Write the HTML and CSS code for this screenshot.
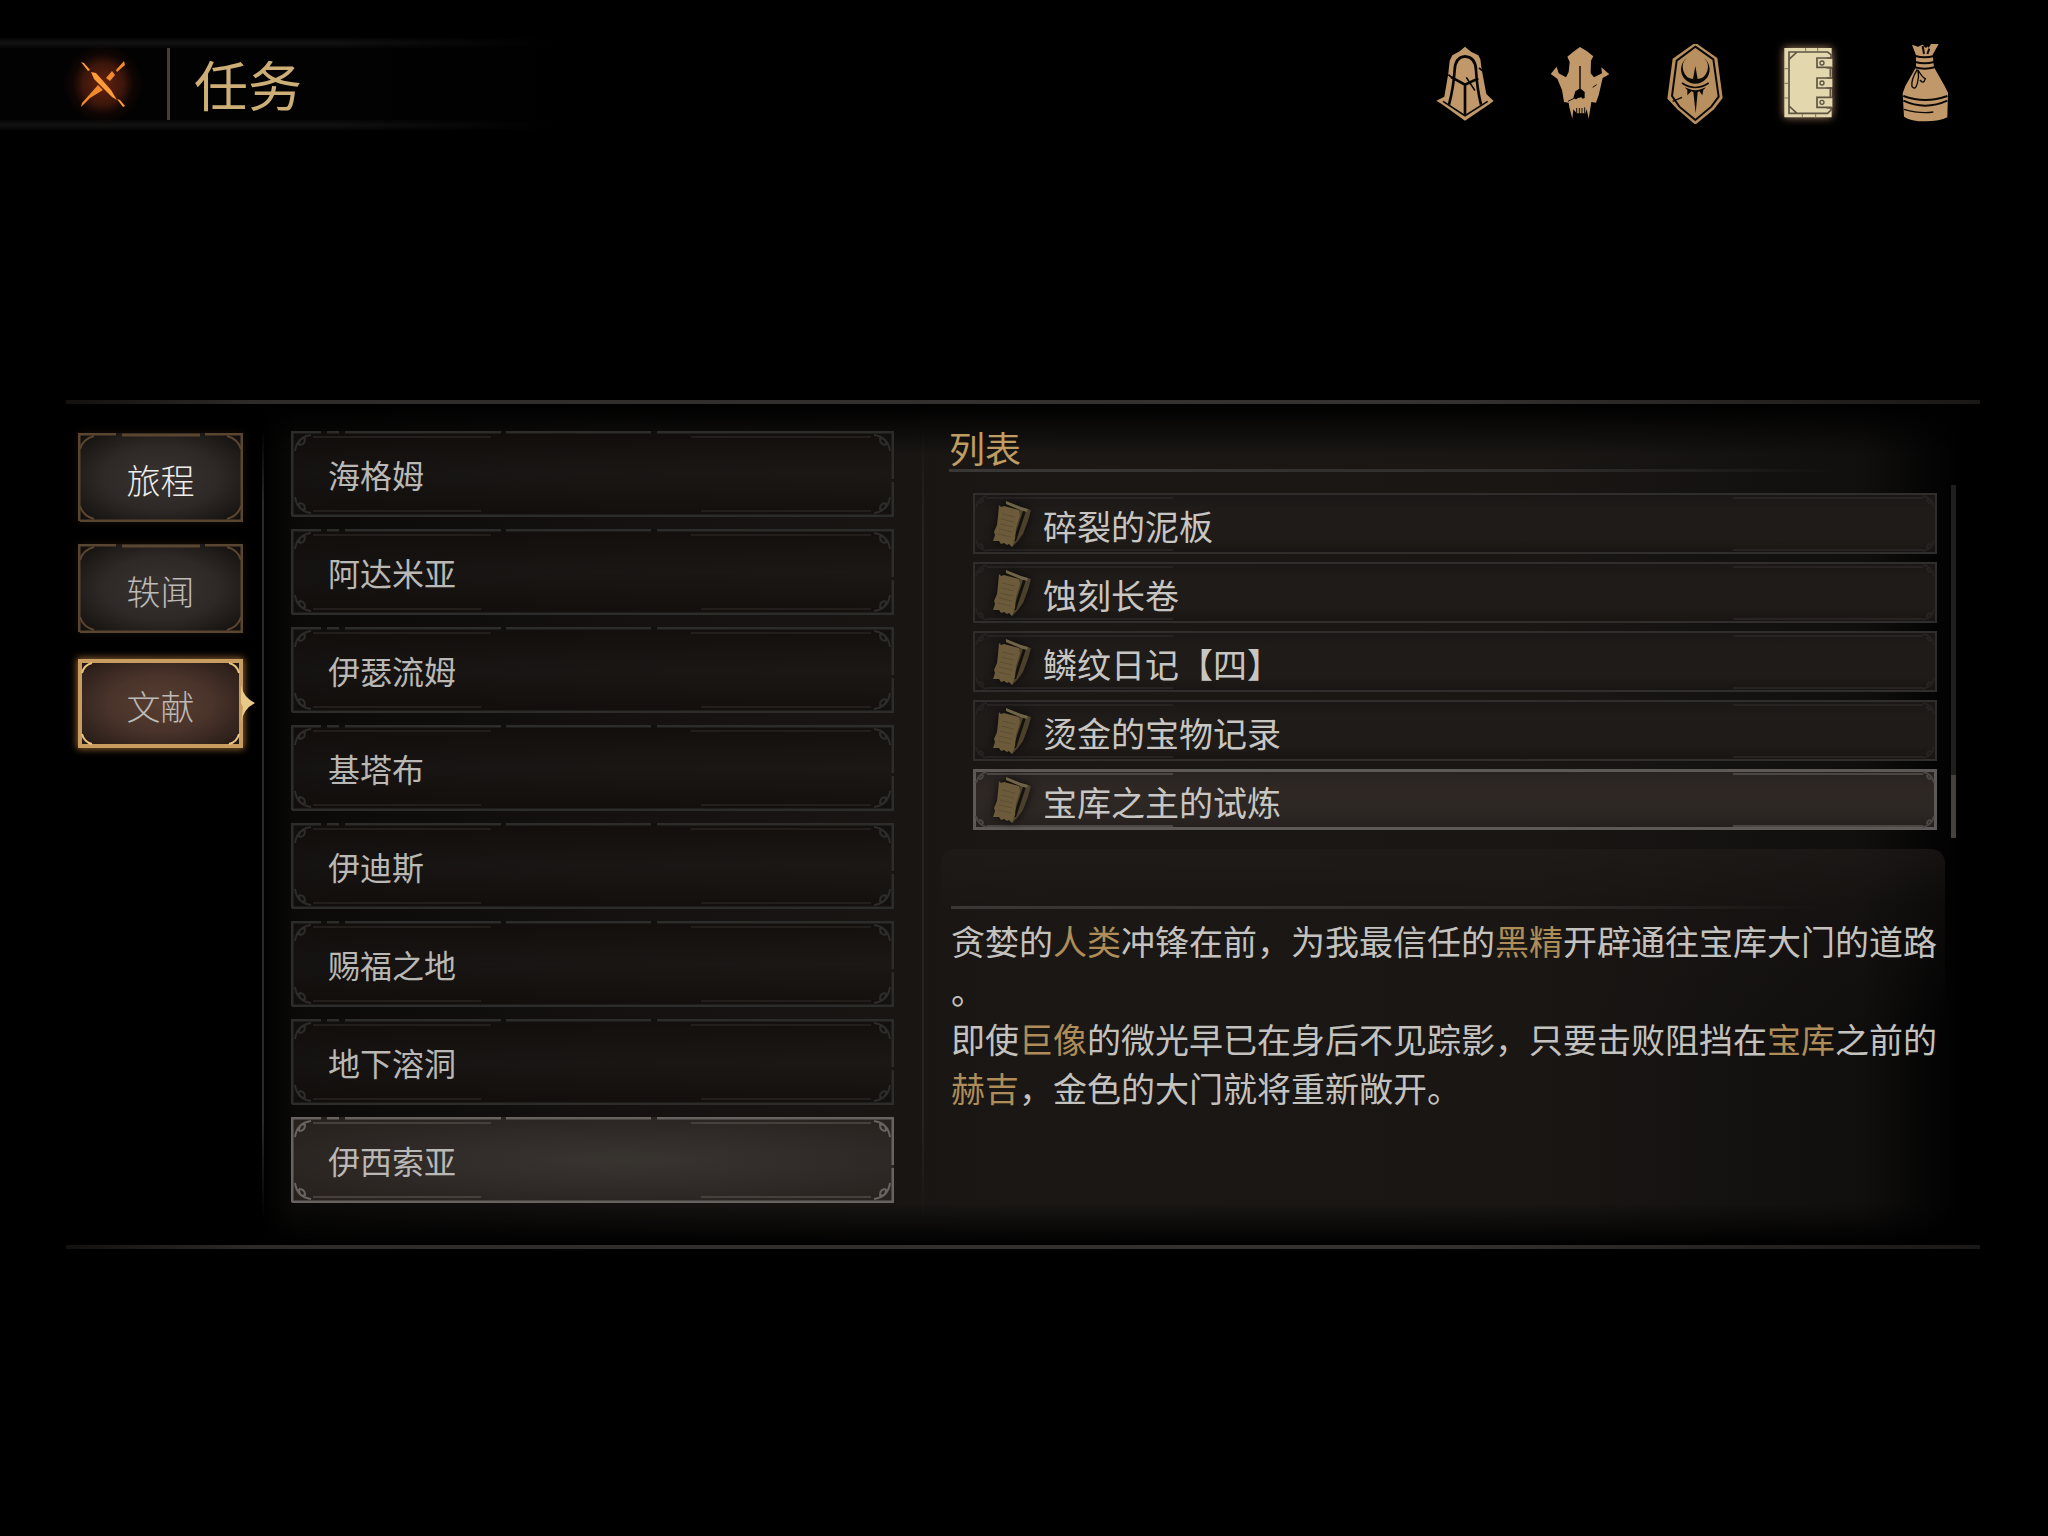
FILE: index.html
```html
<!DOCTYPE html>
<html lang="zh-CN">
<head>
    <meta charset="UTF-8">
    <meta name="viewport" content="width=device-width, initial-scale=1.0">
    <title>任务</title>
    <link rel="stylesheet" href="styles.css">
</head>
<body>
    <svg class="defs" aria-hidden="true">
        <symbol id="book" viewBox="0 0 40 48">
            <path fill="#4a402c" d="M14 2 L39 9 L36 20 L31 33 L26 40 L20 46 L17 8 Z"/>
            <path fill="#14110d" d="M14 3 L29 8 L27 10 L14 6 Z M31 10 L34 10 L27 31 L24 40 L21 40 Z"/>
            <path fill="#6f6448" d="M14 0 L29 6 L36 8 L35 11 L28 9 L14 3 Z"/>
            <path fill="#6b5b3a" d="M7 4 L9 6 L12 5 L27 9 L28 14 L24 27 L23 38 L20 46 L17 43 L15 44 L12 42 L9 43 L7 40 L1 40 L3 34 L2 31 L5 24 L6 15 Z"/>
            <path fill="none" stroke="#5e4f33" d="M10 13 L23 16 M9 18 L22 21 M8 23 L21 26 M7 28 L20 31 M6 33 L19 36"/>
        </symbol>
    </svg>

    <header class="topbar">
        <div class="title-bar">
            <button type="button" class="close" aria-label="关闭">
                <svg viewBox="0 0 44 46">
                    <path fill="#f08a2c" d="M43 0 L44 4 L36 11 L35 9 Z M31 10 L34 14 L29 20 L25 17 Z M17 24 L22 29 L9 37 L0 46 L1 42 Z"/>
                    <path fill="#ff9c38" d="M0 1 L3 2 L9 9 L7 10 Z M10 11 L15 12 L30 29 L36 39 L31 36 L13 18 Z M36 38 L39 39 L44 45 L42 46 Z"/>
                </svg>
            </button>
            <h1>任务</h1>
        </div>
        <nav class="menu">
            <a href="#" aria-label="装备">
                <svg viewBox="72 42 180 240">
                    <path fill="#c0986a" d="M162 50 L180 65 L202 76 L208 88 L212 118 L226 192 L248 213 L236 222 L162 272 L92 222 L76 212 L100 200 L112 130 L116 92 L124 76 L146 64 Z"/>
                    <path fill="none" stroke="#080604" stroke-width="8" d="M114 224 Q128 170 131 120 Q132 82 162 79 Q194 82 195 120 Q198 175 210 224 M122 142 L162 164 L202 145 M162 164 L162 254"/>
                    <path fill="none" stroke="#080604" stroke-width="5" d="M96 214 L162 257 L230 214 M166 142 L192 182 M112 134 L124 144 M214 122 L204 114"/>
                </svg>
            </a>
            <a href="#" aria-label="怪物">
                <svg viewBox="420 42 180 240">
                    <path fill="#c0986a" d="M510 51 L530 63 L550 79 L543 92 L542 130 L552 142 L576 130 L574 112 L598 133 L578 144 L566 196 L558 218 L544 216 L536 266 L530 238 L526 250 L500 250 L490 238 L487 266 L478 232 L476 218 L462 216 L456 180 L442 146 L422 132 L440 110 L446 130 L468 142 L476 126 L479 96 L472 80 L492 64 Z"/>
                    <path fill="#000" d="M508 108 L512 108 L512 176 L524 186 L524 204 L518 206 L514 202 L504 204 L498 208 L490 204 L496 184 L508 176 Z"/>
                    <path fill="none" stroke="#120c07" stroke-width="3" d="M500 234 V252 M508 234 V252 M516 234 V252 M524 232 V250 M474 214 L494 204 M548 172 L560 164"/>
                </svg>
            </a>
            <a href="#" aria-label="徽记">
                <svg viewBox="75 42 180 240">
                    <path fill="#b8905f" d="M166 38 L232 84 L248 204 L222 238 L166 284 L112 238 L82 206 L98 86 Z"/>
                    <path fill="none" stroke="#0c0805" stroke-width="6" d="M166 50 L220 88 L236 200 L214 230 L166 270 L118 230 L96 198 L110 92 Z"/>
                    <path fill="#0c0805" d="M140 84 A43 43 0 1 0 192 84 A34 36 0 0 1 173 147 L166 108 L159 147 A34 36 0 0 1 140 84 Z"/>
                    <path fill="none" stroke="#0c0805" stroke-width="5" d="M126 159 Q166 186 206 159"/>
                    <path fill="#0c0805" d="M134 172 L150 178 Q166 184 182 178 L198 172 L190 180 L187 196 L178 184 L173 186 L167 250 L160 186 L154 184 L142 196 L142 180 Z"/>
                    <path fill="none" stroke="#0c0805" stroke-width="4" d="M98 214 L126 202"/>
                </svg>
            </a>
            <a href="#" class="current" aria-label="任务">
                <svg viewBox="423 42 180 240">
                    <path fill="#e3d7ad" d="M436 54 H578 V82 H562 V116 H578 V142 H562 V176 H578 V202 H562 V236 H578 V262 H436 Z"/>
                    <path fill="#e3d7ad" d="M534 86 H580 V112 H534 Z M534 146 H580 V172 H534 Z M534 204 H580 V232 H534 Z"/>
                    <path fill="none" stroke="#5d5442" stroke-width="5" d="M576 82 V74 L566 66 H450 V250 H566 L576 240 V236 M578 84 H534 V112 H578 M578 144 H534 V174 H578 M578 202 H534 V232 H578 M574 116 V140 M574 176 V200 M450 88 L474 66 M450 228 L474 250"/>
                    <path fill="none" stroke="#82775c" stroke-width="3" d="M436 116 H448 M436 160 H448 M436 204 H448 M500 54 V64 M536 54 V64 M490 252 V262 M530 252 V262"/>
                    <g fill="none" stroke="#5d5442" stroke-width="4"><circle cx="549" cy="99" r="6"/><circle cx="549" cy="159" r="6"/><circle cx="549" cy="217" r="6"/></g>
                </svg>
            </a>
            <a href="#" aria-label="背包">
                <svg viewBox="765 42 180 240">
                    <path fill="#c0986a" d="M816 44 L834 50 L852 42 L858 54 L872 42 L896 42 L878 74 L882 112 L914 168 L924 188 L922 262 Q900 274 856 274 Q812 274 792 260 L788 190 L796 168 L828 112 L828 76 Z"/>
                    <path fill="#000" d="M846 40 L862 40 L856 54 Z M874 40 L866 54 L862 46 Z"/>
                    <path fill="none" stroke="#0c0805" stroke-width="6" d="M826 78 Q854 86 882 78 M826 96 Q854 104 882 96 M824 112 Q854 120 884 112 M790 198 Q856 222 922 198 M790 212 Q856 242 922 212 M848 48 L852 72 M868 56 L862 72"/>
                    <path fill="none" stroke="#0c0805" stroke-width="4" d="M832 118 Q812 150 816 170 Q826 182 832 160 Q838 140 834 120 Q848 144 856 146 Q850 164 840 150 M792 238 Q840 252 880 246"/>
                </svg>
            </a>
        </nav>
    </header>

    <main class="journal">
        <nav class="tabs">
            <button type="button" class="tab first">旅程</button>
            <button type="button" class="tab">轶闻</button>
            <button type="button" class="tab active">文献
                <svg viewBox="0 0 14 48" aria-hidden="true"><path fill="#e8c987" d="M0 6 Q2 18 14 24 Q2 30 0 44 L2 28 L0 24 Z"/></svg>
            </button>
        </nav>

        <div class="pages">
            <ul class="regions">
                <li><button type="button">海格姆</button></li>
                <li><button type="button">阿达米亚</button></li>
                <li><button type="button">伊瑟流姆</button></li>
                <li><button type="button">基塔布</button></li>
                <li><button type="button">伊迪斯</button></li>
                <li><button type="button">赐福之地</button></li>
                <li><button type="button">地下溶洞</button></li>
                <li><button type="button" class="active">伊西索亚</button></li>
            </ul>

            <section class="archive">
                <h2>列表</h2>
                <div class="docs">
                    <ul>
                        <li><button type="button"><svg><use href="#book"/></svg>碎裂的泥板</button></li>
                        <li><button type="button"><svg><use href="#book"/></svg>蚀刻长卷</button></li>
                        <li><button type="button"><svg><use href="#book"/></svg>鳞纹日记【四】</button></li>
                        <li><button type="button"><svg><use href="#book"/></svg>烫金的宝物记录</button></li>
                        <li><button type="button" class="active"><svg><use href="#book"/></svg>宝库之主的试炼</button></li>
                    </ul>
                    <div class="scrollbar"><div class="thumb"></div></div>
                </div>
                <article class="entry">
                    <div class="entry-head"></div>
                    <p>贪婪的<em>人类</em>冲锋在前，为我最信任的<em>黑精</em>开辟通往宝库大门的道路。</p>
                    <p>即使<em>巨像</em>的微光早已在身后不见踪影，只要击败阻挡在<em>宝库</em>之前的<em>赫吉</em>，金色的大门就将重新敞开。</p>
                </article>
            </section>
        </div>
    </main>
</body>
</html>
```

FILE: styles.css
```css
* {
    margin: 0;
    padding: 0;
    box-sizing: border-box;
}

body {
    min-height: 100vh;
    background: #000;
    color: #c4c2bf;
    font-family: 'Noto Sans CJK SC', sans-serif;
    text-spacing-trim: space-all;
}

button {
    font: inherit;
    color: inherit;
    background: none;
    border: none;
    cursor: pointer;
}

ul {
    list-style: none;
}

.defs {
    display: none;
}

/* top bar */
.topbar {
    display: flex;
    justify-content: space-between;
    align-items: flex-start;
    padding: 38px 93px 0 0;
}

.title-bar {
    display: flex;
    align-items: center;
    width: 552px;
    height: 92px;
    padding-left: 63px;
    background:
        linear-gradient(to right, transparent 60%, #000) 0 0 / 100% 100%,
        linear-gradient(#050505, #121212 50%, #050505) 0 0 / 100% 10px no-repeat,
        linear-gradient(#050505, #121212 50%, #050505) 0 100% / 100% 10px no-repeat,
        #020202;
}

.close {
    width: 80px;
    height: 80px;
    background: radial-gradient(closest-side, #64220f, #3d160b 50%, rgba(30, 10, 5, 0.5) 75%, transparent);
}

.close svg {
    display: block;
    width: 44px;
    height: 46px;
    margin: 0 auto;
}

.title-bar h1 {
    margin-left: 24px;
    padding-left: 24px;
    border-left: 3px solid #4b3c33;
    color: #ccae76;
    font-size: 54px;
    font-weight: 400;
    line-height: 72px;
}

.menu {
    display: flex;
    gap: 55px;
    padding-top: 6px;
}

.menu a,
.menu svg {
    display: block;
    width: 60px;
    height: 80px;
}

.menu .current {
    filter: drop-shadow(0 0 4px #a98564);
}

/* journal */
.journal {
    display: flex;
    margin: 270px 68px 0 66px;
    padding: 4px 17px 4px 0;
    background:
        linear-gradient(to right, #121110, #2e2c2a 10%, #353331 70%, #1a1918) 0 0 / 100% 4px no-repeat,
        linear-gradient(to right, #121110, #2e2c2a 10%, #353331 70%, #1a1918) 0 100% / 100% 4px no-repeat;
}

.tabs {
    flex: 0 0 196px;
    display: flex;
    flex-direction: column;
    gap: 22px;
    padding: 29px 19px 0 12px;
}

.tab {
    height: 89px;
    padding-top: 2px;
    font-size: 34px;
    font-weight: 300;
    line-height: 73px;
    color: #bdbab7;
    border: 8px solid transparent;
    border-image: url("data:image/svg+xml,%3Csvg xmlns='http://www.w3.org/2000/svg' width='165' height='89' fill='none' stroke='%235a4630' stroke-width='2'%3E%3Cpath d='M1 88V1H38M44 2H122M127 1H164V88H2' stroke-width='3'/%3E%3Cpath d='M2 16Q5 6 16 3M149 3Q160 6 163 16M2 73Q5 83 16 86M149 86Q160 83 163 73'/%3E%3C/svg%3E") 18 / 18px;
    background: radial-gradient(ellipse at center, #383330, #2e2926 50%, #1c1816 80%, #0c0a09) border-box;
    box-shadow: 0 0 10px #17110b;
}

.tab.first {
    color: #f0eeeb;
}

.tab.active {
    position: relative;
    margin-top: 4px;
    border-image-source: url("data:image/svg+xml,%3Csvg xmlns='http://www.w3.org/2000/svg' width='165' height='89' fill='none' stroke='%23c99c5f' stroke-width='2'%3E%3Cpath d='M2 87V2H163V87Z' stroke-width='4'/%3E%3Cpath stroke='%23e7c47f' d='M4 14Q6 6 14 4M151 4Q159 6 161 14M4 75Q6 83 14 85M151 85Q159 83 161 75'/%3E%3C/svg%3E");
    background-image: radial-gradient(ellipse at center, #583e32, #49332a 45%, #2f211c 80%, #18110f);
    box-shadow: 0 0 7px 1px #8f6431;
}

.tab.active svg {
    position: absolute;
    top: 12px;
    right: -20px;
    width: 14px;
    height: 48px;
}

.pages {
    flex: 1;
    display: grid;
    grid-template-columns: 660fr 1041fr;
    background:
        linear-gradient(transparent 3%, #2c2a29 12%, #2c2a29 85%, transparent 97%) 0 0 / 2px 100% no-repeat,
        linear-gradient(#000, transparent 6%, transparent 95%, #000),
        linear-gradient(to right, #000, #0b0a09 2%, #141110 20%, #1a1715 45%, #191614 75%, #110f0e 94%, #050505 98%, #000);
}

.regions {
    display: flex;
    flex-direction: column;
    gap: 12px;
    padding: 27px 28px 42px 29px;
}

.regions button {
    display: block;
    width: 100%;
    height: 86px;
    padding: 0 17px;
    border: solid transparent;
    border-width: 0 20px;
    font-size: 32px;
    text-align: left;
    color: #bab8b5;
    border-image: url("data:image/svg+xml,%3Csvg xmlns='http://www.w3.org/2000/svg' width='603' height='86' fill='none' stroke='%232c2c2b'%3E%3Cpath stroke-width='3' d='M1 85V1H30M36 1H48M54 1H210M215 1H360M366 1H602V48M602 51V85H1'/%3E%3Cpath stroke='%23211e1c' stroke-width='2' d='M22 6H200M400 6H580M22 80H190M410 80H580'/%3E%3Cpath stroke-width='2' d='M4 20Q6 6 20 4M8 14Q14 14 14 8Q8 6 8 14M599 20Q597 6 583 4M595 14Q589 14 589 8Q595 6 595 14M4 66Q6 80 20 82M8 72Q14 72 14 78Q8 80 8 72M599 66Q597 80 583 82M595 72Q589 72 589 78Q595 80 595 72'/%3E%3C/svg%3E") 20 / 20px;
    background: linear-gradient(rgba(18, 14, 12, 0.8), rgba(28, 25, 23, 0.6) 50%, rgba(18, 14, 12, 0.8)) border-box;
}

.regions .active {
    border-image-source: url("data:image/svg+xml,%3Csvg xmlns='http://www.w3.org/2000/svg' width='603' height='86' fill='none' stroke='%23676360'%3E%3Cpath stroke-width='3' d='M1 85V1H30M36 1H48M54 1H210M215 1H360M366 1H602V48M602 51V85H1'/%3E%3Cpath stroke='%2345403c' stroke-width='2' d='M22 6H200M400 6H580M22 80H190M410 80H580'/%3E%3Cpath stroke-width='2' d='M4 20Q6 6 20 4M8 14Q14 14 14 8Q8 6 8 14M599 20Q597 6 583 4M595 14Q589 14 589 8Q595 6 595 14M4 66Q6 80 20 82M8 72Q14 72 14 78Q8 80 8 72M599 66Q597 80 583 82M595 72Q589 72 589 78Q595 80 595 72'/%3E%3C/svg%3E");
    background: radial-gradient(ellipse at 55% 50%, #383430, #302b28 45%, #261f1c) border-box;
}

/* document list and text */
.archive {
    padding: 22px 7px 0 19px;
    background: linear-gradient(transparent 3%, #262423 15%, #262423 85%, transparent 97%) 0 0 / 2px 100% no-repeat;
}

.archive h2 {
    margin-left: 8px;
    height: 46px;
    background: linear-gradient(to right, #3a3836, #2e2c2a 60%, transparent 88%) 0 100% / 100% 3px no-repeat;
    color: #bf9d62;
    font-size: 36px;
    font-weight: 400;
    line-height: 42px;
}

.docs {
    display: flex;
    gap: 14px;
    margin: 13px 0 0 32px;
}

.docs ul {
    flex: 1;
    display: flex;
    flex-direction: column;
    gap: 8px;
    padding: 8px 0;
}

.docs button {
    display: flex;
    align-items: center;
    gap: 11px;
    width: 100%;
    height: 61px;
    padding: 3px 0 0 5px;
    border: solid transparent;
    border-width: 0 14px;
    font-size: 34px;
    color: #c8c6c3;
    border-image: url("data:image/svg+xml,%3Csvg xmlns='http://www.w3.org/2000/svg' width='964' height='61' fill='none' stroke='%232f2e2d'%3E%3Cpath stroke-width='2' d='M1 60V1H963V60Z'/%3E%3Cpath stroke='%23262322' stroke-width='2' d='M14 5H200M760 5H950M14 57H200M760 57H950M3 14Q5 5 14 3M6 10Q10 10 10 6M961 14Q959 5 950 3M958 10Q954 10 954 6M3 47Q5 56 14 58M6 51Q10 51 10 55M961 47Q959 56 950 58M958 51Q954 51 954 55'/%3E%3C/svg%3E") 14 / 14px;
    background: linear-gradient(#191615, #1f1b19 25%, #1f1b18 75%, #171413) border-box;
}

.docs .active {
    border-image-source: url("data:image/svg+xml,%3Csvg xmlns='http://www.w3.org/2000/svg' width='964' height='61' fill='none' stroke='%235d5956'%3E%3Cpath stroke-width='4' d='M1 60V1H963V60Z'/%3E%3Cpath stroke='%234a4643' stroke-width='2' d='M14 5H200M760 5H950M14 57H200M760 57H950M3 14Q5 5 14 3M6 10Q10 10 10 6M961 14Q959 5 950 3M958 10Q954 10 954 6M3 47Q5 56 14 58M6 51Q10 51 10 55M961 47Q959 56 950 58M958 51Q954 51 954 55'/%3E%3C/svg%3E");
    background: linear-gradient(#272220, #2e2724 30%, #2d2724 70%, #241f1d) border-box;
}

.docs svg {
    width: 40px;
    height: 48px;
    filter: drop-shadow(0 0 5px #0a0908);
}

.scrollbar {
    display: flex;
    align-items: flex-end;
    width: 5px;
    background: #1f1e1d;
}

.thumb {
    width: 100%;
    height: 63px;
    background: #45413d;
}

.entry {
    margin: 11px 11px 0 0;
    padding: 0 4px 24px 10px;
    border-radius: 14px;
    background: linear-gradient(rgba(34, 29, 27, 0.6), rgba(26, 22, 20, 0.4) 20%, transparent 60%);
}

.entry-head {
    height: 60px;
    margin-bottom: 7px;
    background: linear-gradient(to right, #3a3836, #2e2c2a 60%, transparent 88%) 0 100% / 100% 3px no-repeat;
}

.entry p {
    font-size: 34px;
    line-height: 49px;
    line-break: anywhere;
}

.entry em {
    font-style: normal;
    color: #ae8d59;
}
```
